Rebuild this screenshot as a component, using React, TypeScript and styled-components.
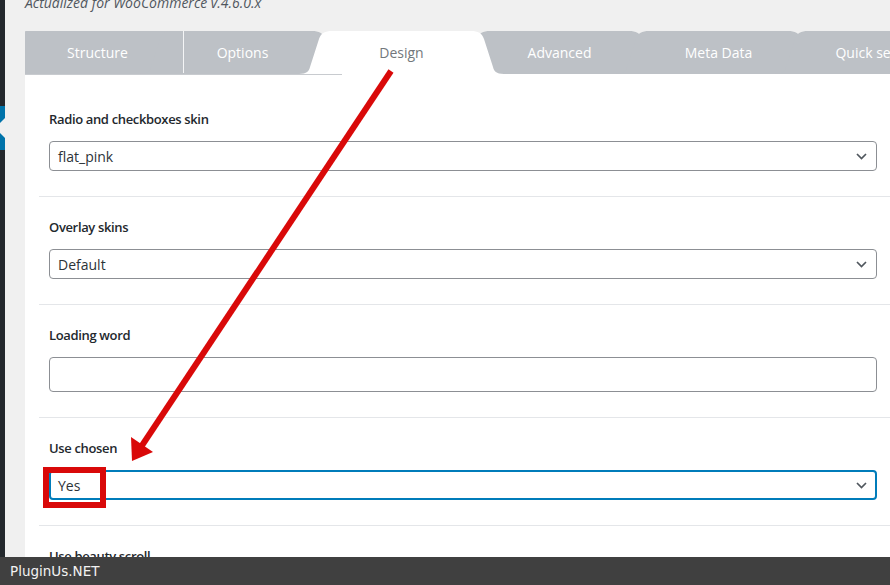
import React from "react";
import styled, { createGlobalStyle } from "styled-components";

const Global = createGlobalStyle`
  html, body {
    margin: 0;
    padding: 0;
    background: #f0f0f0;
    overflow: hidden;
    font-family: "Open Sans", "Liberation Sans", sans-serif;
  }
  #root { min-height: 100vh; }
`;

const Page = styled.div`
  display: flex;
  position: relative;
  width: 890px;
  height: 585px;
  overflow: hidden;
`;

const Sidebar = styled.div`
  width: 5px;
  flex-shrink: 0;
  background: #23282d;
  display: flex;
  flex-direction: column;
`;

const ActiveMenu = styled.div`
  margin-top: 106px;
  height: 44px;
  background: #0073aa;
  position: relative;
  overflow: hidden;
  &::after {
    content: "";
    position: absolute;
    right: 0;
    top: 50%;
    margin-top: -10px;
    border: 10px solid transparent;
    border-right-color: #f0f0f0;
  }
`;

const Main = styled.div`
  flex: 1;
  padding-left: 20px;
  display: flex;
  flex-direction: column;
  min-width: 0;
`;

const Header = styled.div`
  flex-shrink: 0;
  margin-top: -7px;
  height: 20px;
  line-height: 20px;
  font-size: 14px;
  font-style: italic;
  color: #50575e;
  white-space: nowrap;
`;

const TabStrip = styled.div`
  flex-shrink: 0;
  margin-top: 18px;
  height: 43px;
  display: flex;
  overflow: hidden;
`;

const tabPath =
  "path('M0,43 C8,43 10,40 11,36 L20,8 C22,2 26,0 33,0 L172,0 C179,0 183,2 185,8 L194,36 C195,40 197,43 205,43 Z')";

const Tab = styled.div<{ $active?: boolean; $shift: number; $divider?: boolean }>`
  flex-shrink: 0;
  width: 205px;
  height: 43px;
  margin-left: ${(p) => p.$shift}px;
  position: relative;
  z-index: ${(p) => (p.$active ? 3 : 1)};
  clip-path: ${tabPath};
  background: ${(p) => (p.$active ? "#ffffff" : "#bdc1c6")};
  color: ${(p) => (p.$active ? "#72777c" : "#ffffff")};
  font-size: 14px;
  line-height: 43px;
  text-align: center;
  white-space: nowrap;
  &::after {
    content: "";
    display: ${(p) => (p.$divider ? "block" : "none")};
    position: absolute;
    left: 43px;
    top: 0;
    bottom: 1px;
    width: 1px;
    background: #f4f5f6;
  }
`;

const Panel = styled.div`
  flex-shrink: 0;
  background: #ffffff;
  padding: 15px 0 0 14px;
  position: relative;
  &::before {
    content: "";
    position: absolute;
    left: 0;
    top: 0;
    width: 317px;
    height: 1px;
    background: #c8cbcf;
  }
`;

const Row = styled.div`
  padding: 20px 13px 25px 10px;
  border-bottom: 1px solid #e4e6e9;
  display: flex;
  flex-direction: column;
`;

const Label = styled.div`
  font-size: 13px;
  font-weight: 600;
  letter-spacing: -0.35px;
  line-height: 20px;
  color: #23282d;
  margin-bottom: 12px;
`;

const SelectBox = styled.div<{ $focus?: boolean }>`
  height: 30px;
  box-sizing: border-box;
  border: ${(p) => (p.$focus ? "2px solid #007cba" : "1px solid #8c8f94")};
  border-radius: 4px;
  display: flex;
  align-items: center;
  justify-content: space-between;
  padding: 0 ${(p) => (p.$focus ? 8 : 9)}px 0 ${(p) => (p.$focus ? 7 : 8)}px;
  font-size: 14px;
  color: #2c3338;
  background: #fff;
`;

const TextInput = styled.div`
  height: 35px;
  box-sizing: border-box;
  border: 1px solid #8c8f94;
  border-radius: 4px;
  background: #fff;
`;

const Footer = styled.div`
  position: fixed;
  left: 0;
  right: 0;
  bottom: 0;
  height: 28px;
  background: #404040;
  color: #f2f2f2;
  font-family: "DejaVu Sans", "Liberation Sans", sans-serif;
  font-size: 13.5px;
  line-height: 28px;
  padding-left: 10px;
  z-index: 10;
`;

const ArrowLayer = styled.svg`
  position: absolute;
  left: 0;
  top: 0;
  pointer-events: none;
  z-index: 8;
`;

const Highlight = styled.div`
  position: absolute;
  left: 43px;
  top: 467px;
  width: 63px;
  height: 41px;
  box-sizing: border-box;
  border: 6px solid #d90909;
  z-index: 8;
`;

const Chevron = () => (
  <svg width="11" height="7" viewBox="0 0 11 7">
    <polyline points="1,1 5.5,5.5 10,1" fill="none" stroke="#50575e" strokeWidth="1.7" />
  </svg>
);

const tabs = [
  { name: "Structure", shift: -30 },
  { name: "Options", shift: -60, divider: true },
  { name: "Design", shift: -46, active: true },
  { name: "Advanced", shift: -47 },
  { name: "Meta Data", shift: -46 },
  { name: "Quick search", shift: -46 },
];

export default function App() {
  return (
    <Page>
      <Global />
      <Sidebar>
        <ActiveMenu />
      </Sidebar>
      <Main>
        <Header>Actualized for WooCommerce v.4.6.0.x</Header>
        <TabStrip>
          {tabs.map((t) => (
            <Tab key={t.name} $shift={t.shift} $active={t.active} $divider={t.divider}>
              {t.name}
            </Tab>
          ))}
        </TabStrip>
        <Panel>
          <Row>
            <Label>Radio and checkboxes skin</Label>
            <SelectBox>
              <span>flat_pink</span>
              <Chevron />
            </SelectBox>
          </Row>
          <Row>
            <Label>Overlay skins</Label>
            <SelectBox>
              <span>Default</span>
              <Chevron />
            </SelectBox>
          </Row>
          <Row>
            <Label>Loading word</Label>
            <TextInput />
          </Row>
          <Row>
            <Label>Use chosen</Label>
            <SelectBox $focus>
              <span>Yes</span>
              <Chevron />
            </SelectBox>
          </Row>
          <Row>
            <Label>Use beauty scroll</Label>
            <SelectBox>
              <span>No</span>
              <Chevron />
            </SelectBox>
          </Row>
        </Panel>
      </Main>
      <ArrowLayer width="890" height="585" viewBox="0 0 890 585">
        <line x1="391" y1="71" x2="141" y2="447" stroke="#d90909" strokeWidth="6" />
        <polygon points="132,461 131,437 153,452" fill="#d90909" />
      </ArrowLayer>
      <Highlight />
      <Footer>PluginUs.NET</Footer>
    </Page>
  );
}
